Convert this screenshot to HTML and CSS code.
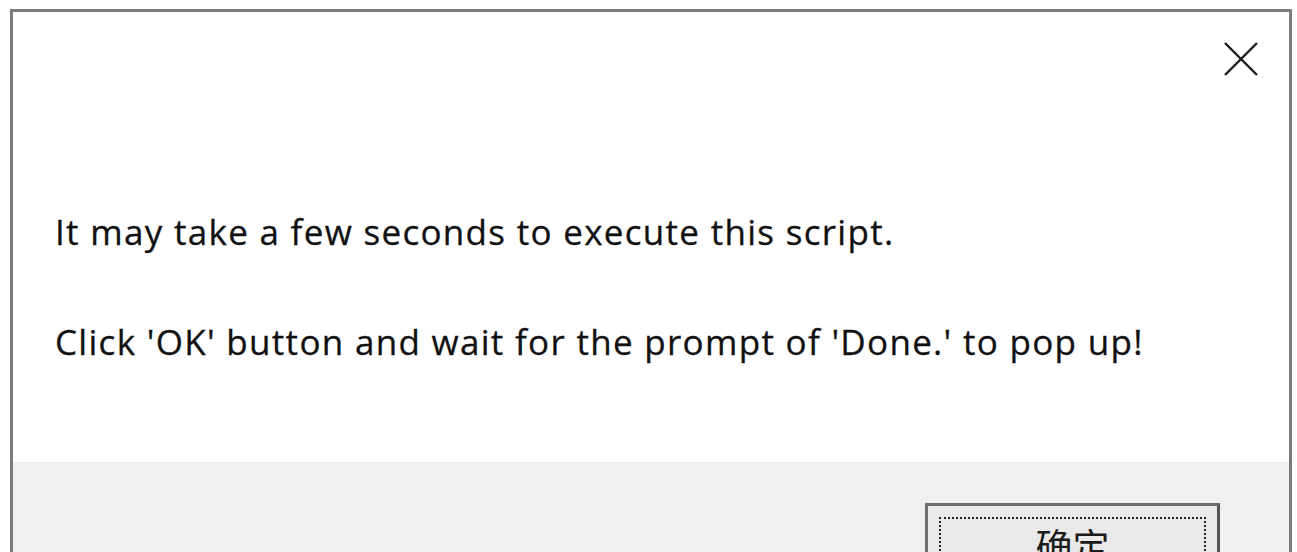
FILE: index.html
```html
<!DOCTYPE html>
<html lang="en">
<head>
  <meta charset="UTF-8" />
  <title>Message</title>
  <link rel="stylesheet" href="styles.css">
</head>
<body>
  <div class="dialog">
    <div class="dialog-head">
      <button class="close-btn" title="Close">
        <svg width="36" height="36" viewBox="0 0 36 36">
          <path d="M2 2 L34 34 M34 2 L2 34" stroke="#1a1a1a" stroke-width="2.4" fill="none" />
        </svg>
      </button>
    </div>
    <div class="dialog-body">
      <p>It may take a few seconds to execute this script.</p>
      <p>Click 'OK' button and wait for the prompt of 'Done.' to pop up!</p>
    </div>
    <div class="dialog-foot">
      <button class="ok-btn"><span class="focus">确定</span></button>
    </div>
  </div>
</body>
</html>
```

FILE: styles.css
```css
* {
  box-sizing: border-box;
}
body {
  margin: 0;
  padding: 0;
  background: #ffffff;
  font-family: 'Open Sans', 'Noto Sans', sans-serif;
  overflow: hidden;
}
.dialog {
  margin: 9px 5px 0 10px;
  height: 600px;
  border: 3px solid #7c7c7c;
  border-bottom: none;
  background: #ffffff;
  display: flex;
  flex-direction: column;
}
.dialog-head {
  display: flex;
  justify-content: flex-end;
  padding: 29px 30px 0 0;
}
.close-btn {
  width: 36px;
  height: 36px;
  padding: 0;
  border: none;
  background: transparent;
  display: flex;
}
.dialog-body {
  padding: 127px 0 93px 42px;
  color: #111;
  font-size: 35px;
  letter-spacing: 1.3px;
  line-height: 55px;
  -webkit-text-stroke: 0.3px #111;
}
.dialog-body p {
  margin: 0;
}
.dialog-body p + p {
  margin-top: 55px;
}
.dialog-foot {
  flex: 1;
  background: #f0f0f0;
  border-top: 1px solid #ececec;
  display: flex;
  justify-content: flex-end;
  align-items: flex-start;
  padding: 40px 69px 0 0;
}
.ok-btn {
  width: 295px;
  height: 90px;
  padding: 11px;
  border: 3px solid #6e6e6e;
  border-right-color: #555;
  background: #e9e9e9;
  display: flex;
}
.focus {
  flex: 1;
  border: 2px dotted #222;
  font-family: 'Noto Sans CJK SC', sans-serif;
  font-size: 37px;
  line-height: 1;
  color: #1b1b1b;
  padding-top: 8px;
  text-align: center;
}
```
